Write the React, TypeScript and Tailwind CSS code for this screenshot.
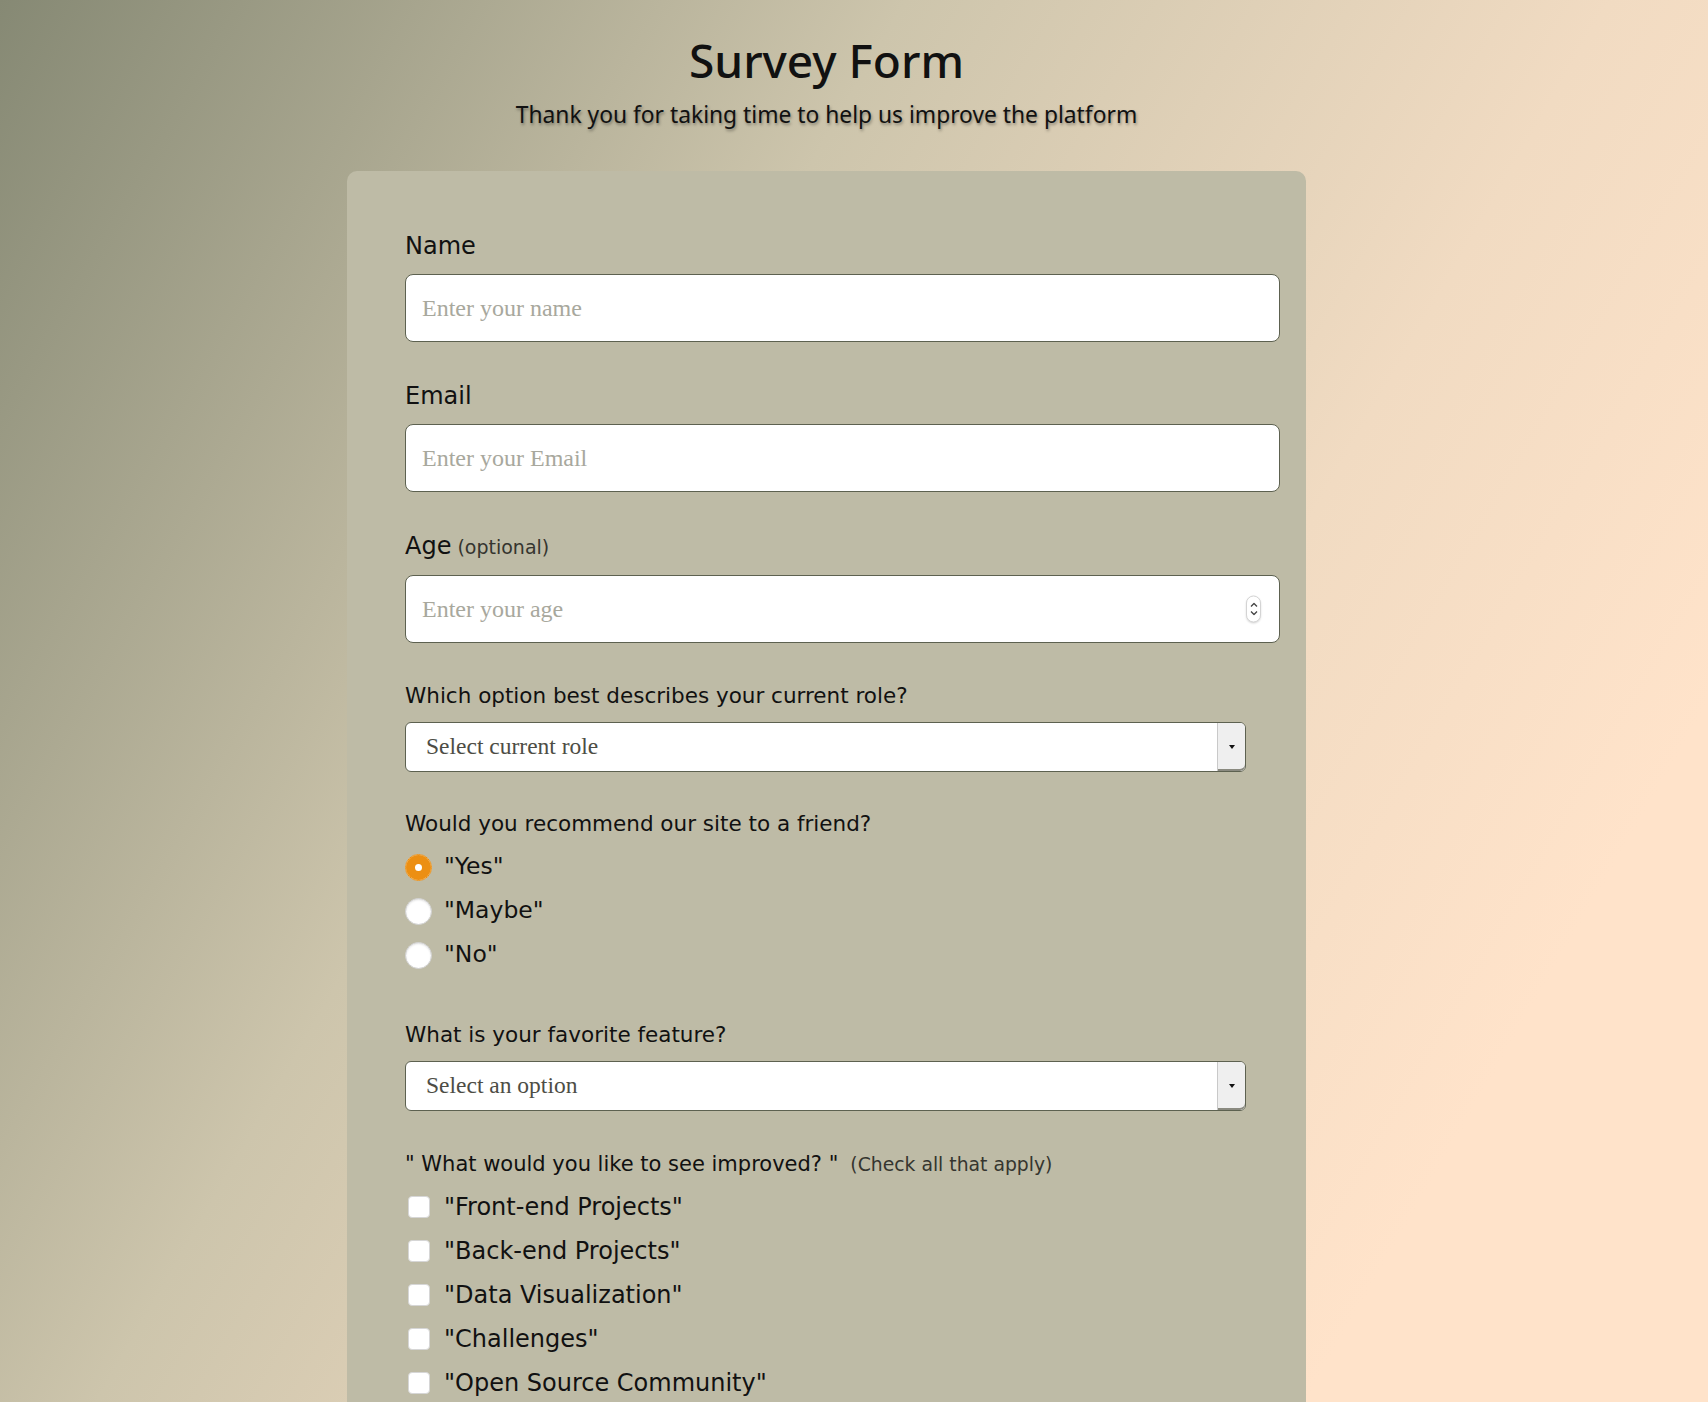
import React from 'react';

const roles = ['Student', 'Full Time Job', 'Full Time Learner', 'Prefer not to say', 'Other'];
const features = ['Challenges', 'Projects', 'Community', 'Open Source'];
const recommend = ['Yes', 'Maybe', 'No'];
const improvements = ['Front-end Projects', 'Back-end Projects', 'Data Visualization', 'Challenges', 'Open Source Community'];

function TextField({ label, extra, placeholder, spinner }: { label: string; extra?: string; placeholder: string; spinner?: boolean }) {
  return (
    <div className="flex flex-col">
      <label className="text-[24px] leading-[30px]">
        {label}
        {extra && <span className="ml-[6px] text-[19px] text-[#35352f]">{extra}</span>}
      </label>
      <div className="relative mt-[13px] w-[875px]">
        <input
          type="text"
          placeholder={placeholder}
          className="h-[68px] w-full rounded-lg border border-[#5d6150] bg-white px-4 font-['Liberation_Serif',serif] text-[24px] text-[#222] outline-none placeholder:text-[#a8a89d]"
        />
        {spinner && (
          <div className="absolute right-[19px] top-1/2 flex h-[27px] w-[15px] -translate-y-1/2 flex-col items-center justify-center gap-[3px] rounded-full border border-[#d4d4d4] bg-white shadow-[0_1px_2px_rgba(0,0,0,0.15)]">
            <svg width="8" height="5" viewBox="0 0 8 5" fill="none">
              <path d="M1 4L4 1L7 4" stroke="#444" strokeWidth="1.3" />
            </svg>
            <svg width="8" height="5" viewBox="0 0 8 5" fill="none">
              <path d="M1 1L4 4L7 1" stroke="#444" strokeWidth="1.3" />
            </svg>
          </div>
        )}
      </div>
    </div>
  );
}

function Dropdown({ placeholder, options }: { placeholder: string; options: string[] }) {
  return (
    <div className="relative mt-[13px] w-[841px]">
      <select
        defaultValue=""
        className="h-[50px] w-full appearance-none rounded-md border border-[#5d6150] bg-white pl-5 pr-10 font-['Liberation_Serif',serif] text-[23.5px] text-[#4d4d45] outline-none"
      >
        <option value="" disabled hidden>
          {placeholder}
        </option>
        {options.map((o) => (
          <option key={o} value={o}>
            {o}
          </option>
        ))}
      </select>
      <div className="pointer-events-none absolute bottom-[1px] right-[1px] top-[1px] flex w-[28px] items-center justify-center rounded-r-[5px] border-l border-[#c9c9c9] bg-[#efefef] shadow-[inset_0_-2px_0_#8a8a80]">
        <span className="h-0 w-0 border-x-[3px] border-t-[4px] border-x-transparent border-t-[#111]" />
      </div>
    </div>
  );
}

export default function App() {
  return (
    <div className="min-h-screen bg-[linear-gradient(120deg,#868974_0%,#cdc5ac_36%,#f1dbc2_64%,#ffe3ca_84%)] bg-fixed font-['DejaVu_Sans',sans-serif] text-[#111]">
      <div className="flex w-[1653px] flex-col items-center pt-[32px]">
        <h1 className="font-['Noto_Sans',sans-serif] text-[46px] font-medium leading-[56px]">Survey Form</h1>
        <p className="mt-[13px] font-['Noto_Sans',sans-serif] text-[22.8px] leading-[28px] [text-shadow:1px_2px_3px_rgba(0,0,0,0.35)]">
          Thank you for taking time to help us improve the platform
        </p>

        <form className="mt-[42px] flex w-[959px] flex-col rounded-[10px] bg-[#bebba6] pb-[60px] pl-[58px] pt-[60px]">
          <TextField label="Name" placeholder="Enter your name" />
          <div className="mt-[39px]">
            <TextField label="Email" placeholder="Enter your Email" />
          </div>
          <div className="mt-[39px]">
            <TextField label="Age" extra="(optional)" placeholder="Enter your age" spinner />
          </div>

          {/* role */}
          <p className="mt-[40px] text-[21.5px] leading-[26px]">Which option best describes your current role?</p>
          <Dropdown placeholder="Select current role" options={roles} />

          {/* recommend */}
          <p className="mt-[39px] text-[21.5px] leading-[26px]">Would you recommend our site to a friend?</p>
          <div className="mt-[8px] flex flex-col">
            {recommend.map((r) => (
              <label key={r} className="flex h-[44px] items-center gap-[12px] text-[23.5px]">
                <input
                  type="radio"
                  name="recommend"
                  defaultChecked={r === 'Yes'}
                  className="h-[27px] w-[27px] appearance-none rounded-full border border-[#cfcfcf] bg-white shadow-[inset_0_1px_2px_rgba(0,0,0,0.12)] checked:border-[#ec8f13] checked:shadow-[inset_0_0_0_9px_#ec8f13]"
                />
                {`"${r}"`}
              </label>
            ))}
          </div>

          {/* feature */}
          <p className="mt-[45px] text-[21.5px] leading-[26px]">What is your favorite feature?</p>
          <Dropdown placeholder="Select an option" options={features} />

          {/* improvements */}
          <p className="mt-[40px] text-[21px] leading-[26px]">
            " What would you like to see improved? "
            <span className="ml-3 text-[18.8px] text-[#35352f]">(Check all that apply)</span>
          </p>
          <div className="mt-[7px] flex flex-col">
            {improvements.map((i) => (
              <label key={i} className="flex h-[44px] items-center gap-[12px] text-[24px]">
                <span className="flex w-[27px] justify-center">
                  <input
                    type="checkbox"
                    className="h-[22px] w-[22px] appearance-none rounded-[4px] border border-[#d6d6d6] bg-white"
                  />
                </span>
                {`"${i}"`}
              </label>
            ))}
          </div>
        </form>
      </div>
    </div>
  );
}
